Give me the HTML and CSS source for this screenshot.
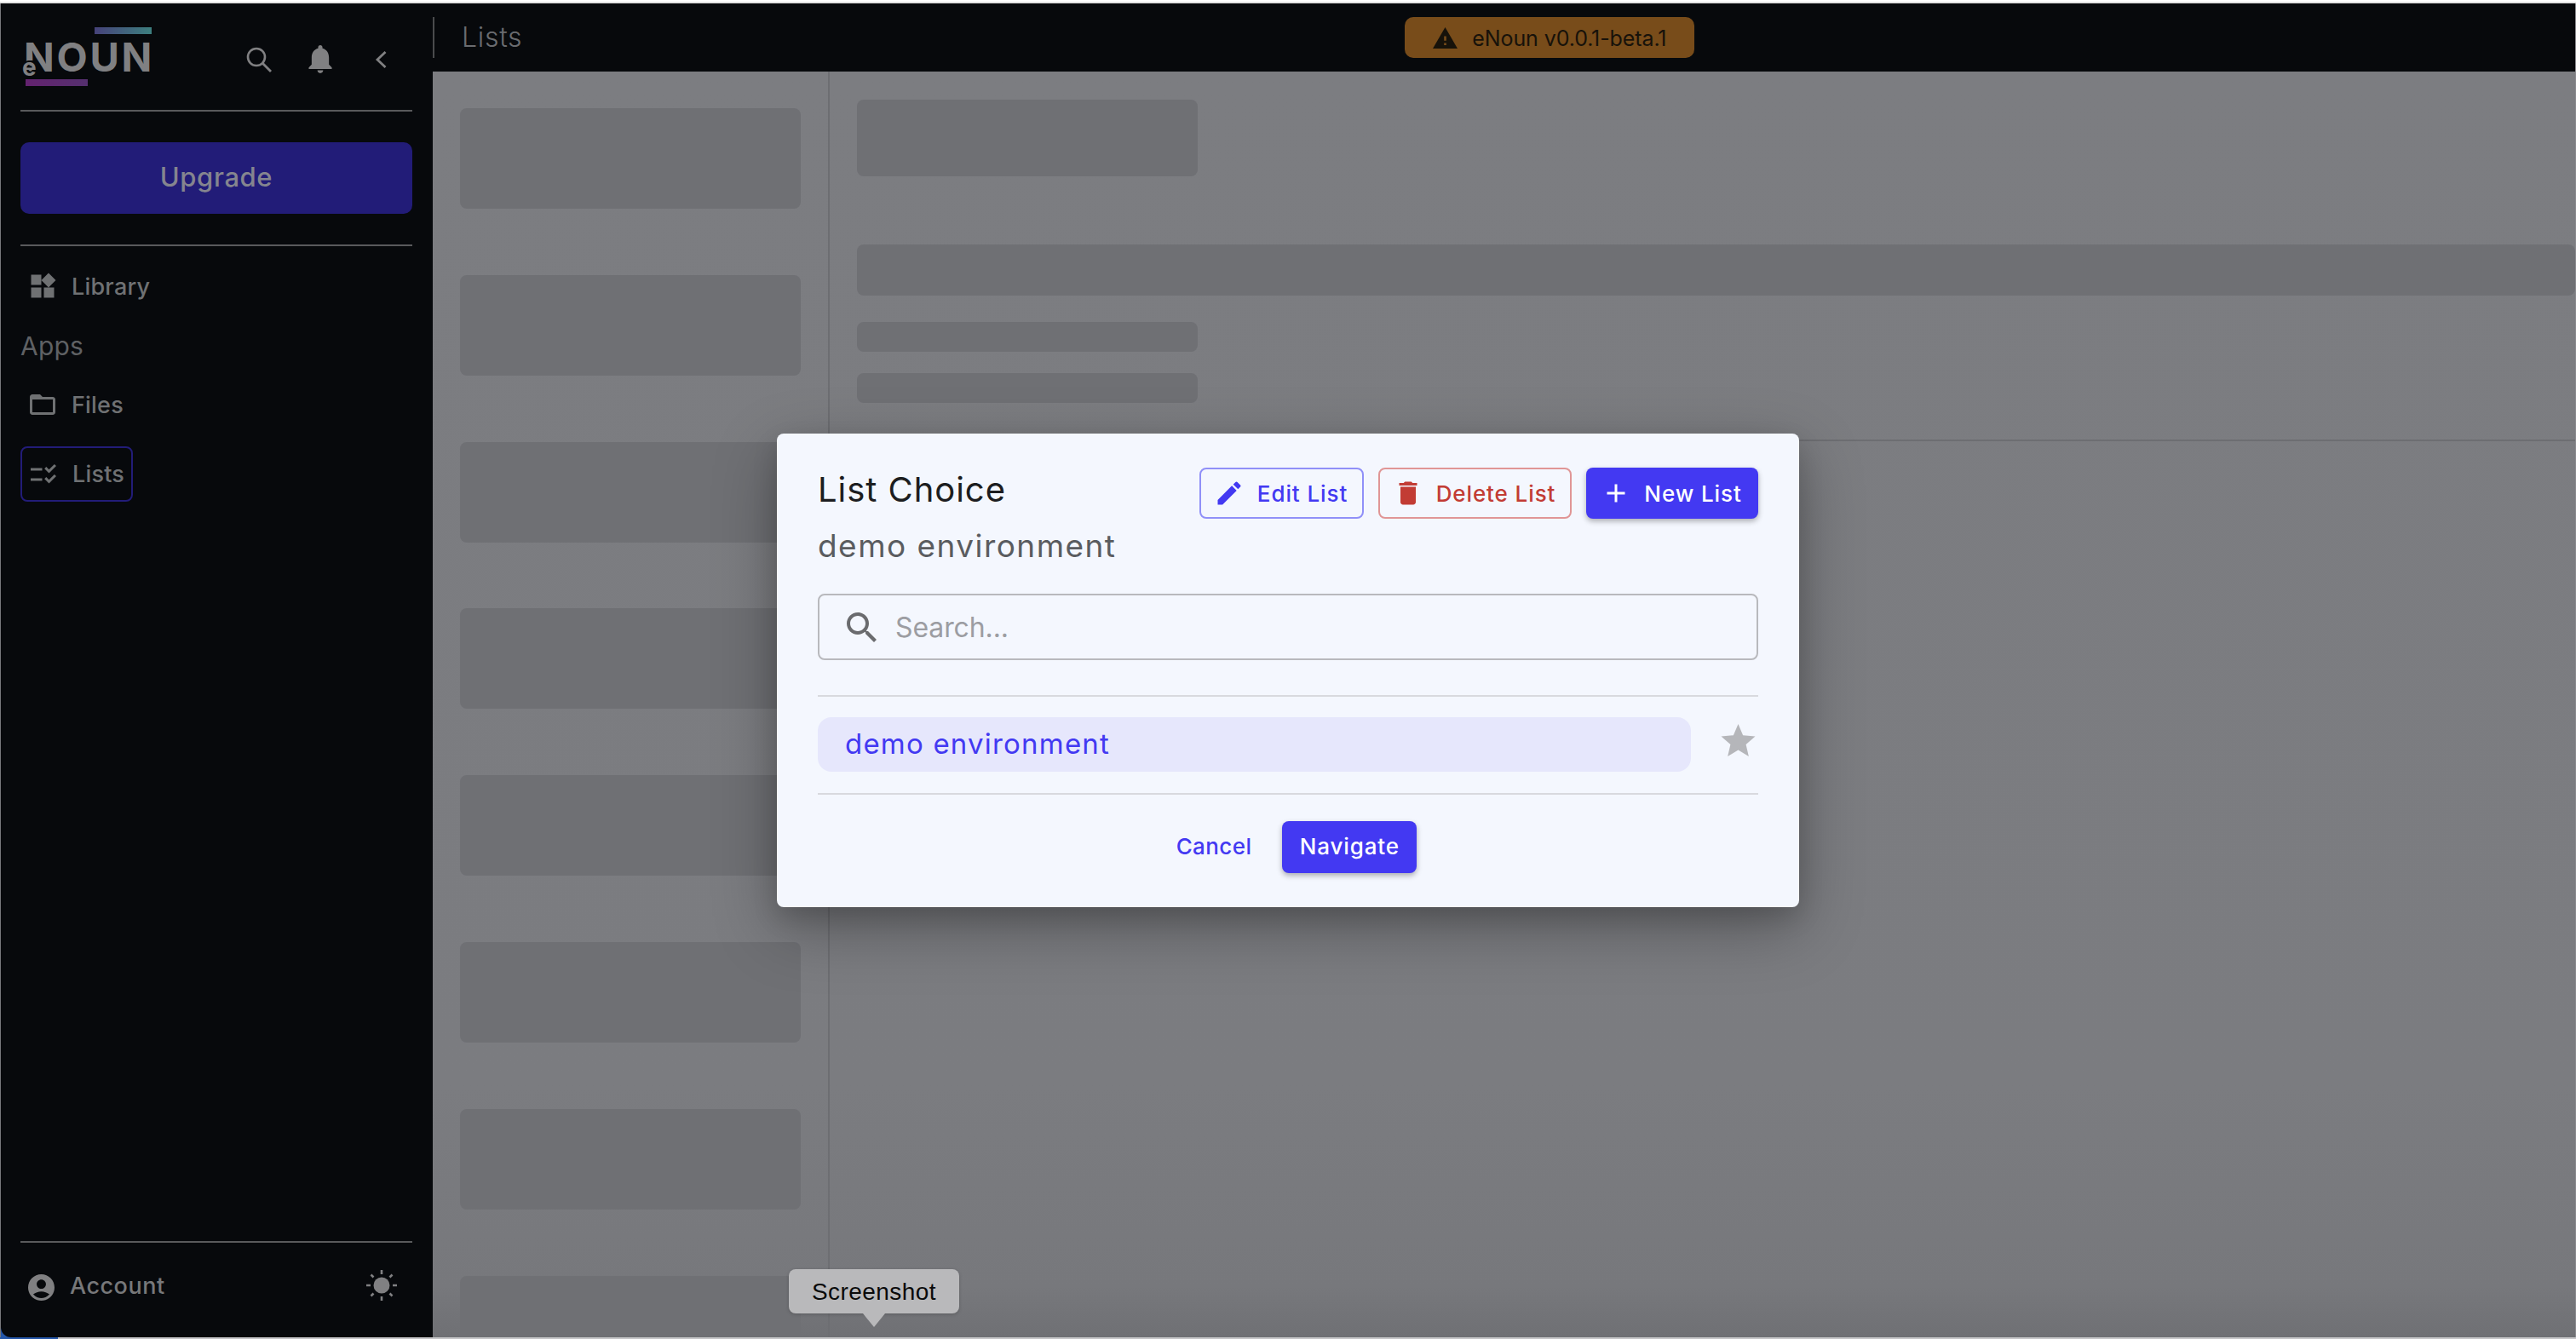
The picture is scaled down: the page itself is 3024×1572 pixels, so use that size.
FILE: index.html
```html
<!DOCTYPE html>
<html lang="en">
<head>
<meta charset="utf-8">
<title>eNoun Lists</title>
<link rel="stylesheet" href="styles.css">
</head>
<body>
<div class="app">
  <div class="shell">
    <aside class="sidebar">
      <div class="side-head">
        <div class="logo">
          <span class="logo-bar-top"></span>
          <span class="logo-word">NOUN</span>
          <span class="logo-e">e</span>
          <span class="logo-bar-bottom"></span>
        </div>
        <div class="head-icons">
          <svg class="ic-search" viewBox="0 0 30 30"><circle cx="12" cy="12" r="10" fill="none" stroke="currentColor" stroke-width="2.6"/><path d="M19 19l10 10" stroke="currentColor" stroke-width="2.8"/></svg>
          <svg class="ic-bell" viewBox="4 2.5 16 19.5"><path fill="currentColor" d="M12 22c1.1 0 2-.9 2-2h-4c0 1.1.89 2 2 2zm6-6v-5c0-3.07-1.64-5.64-4.5-6.32V4c0-.83-.67-1.5-1.5-1.5s-1.5.67-1.5 1.5v.68C7.63 5.36 6 7.92 6 11v5l-2 2v1h16v-1l-2-2z"/></svg>
          <svg class="ic-chev" viewBox="0 0 14 22"><path d="M12.5 2 3 11l9.5 9" fill="none" stroke="currentColor" stroke-width="2.8"/></svg>
        </div>
      </div>
      <div class="rule"></div>
      <button class="upgrade">Upgrade</button>
      <div class="rule"></div>
      <nav class="nav">
        <a class="nav-item"><svg class="nav-ic" viewBox="0 0 24 24"><path fill="currentColor" d="M13 13v8h8v-8h-8zM3 21h8v-8H3v8zM3 3v8h8V3H3zm13.66-1.31L11 7.34 16.66 13l5.66-5.66-5.66-5.65z"/></svg><span>Library</span></a>
        <div class="nav-label">Apps</div>
        <a class="nav-item"><svg class="nav-ic" viewBox="0 0 24 24"><path fill="currentColor" d="M20 6h-8l-2-2H4c-1.1 0-1.99.9-1.99 2L2 18c0 1.1.9 2 2 2h16c1.1 0 2-.9 2-2V8c0-1.1-.9-2-2-2zm0 12H4V8h16v10z"/></svg><span>Files</span></a>
        <a class="nav-item active"><svg class="nav-ic" viewBox="0 0 24 24"><path fill="currentColor" d="M11 7H2v2h9V7zm0 8H2v2h9v-2zm5.34-4L12.8 7.46l1.41-1.41 2.12 2.12 4.24-4.24L22 5.34 16.34 11zm0 8-3.54-3.54 1.41-1.41 2.12 2.12 4.24-4.24L22 13.34 16.34 19z"/></svg><span>Lists</span></a>
      </nav>
      <div class="side-foot">
        <div class="account">
          <svg class="acc-ic" viewBox="2 2 20 20"><path fill="currentColor" d="M12 2C6.48 2 2 6.48 2 12s4.48 10 10 10 10-4.48 10-10S17.52 2 12 2zm0 4c1.93 0 3.5 1.57 3.5 3.5S13.93 13 12 13s-3.5-1.57-3.5-3.5S10.07 6 12 6zm0 14c-2.03 0-4.43-.82-6.14-2.88C7.55 15.8 9.68 15 12 15s4.45.8 6.14 2.12C16.43 19.18 14.03 20 12 20z"/></svg>
          <span>Account</span>
        </div>
        <svg class="sun" viewBox="0 0 36 36"><circle cx="18" cy="18" r="9.5" fill="currentColor"/><path d="M18 0v5M18 31v5M0 18h5M31 18h5M5.5 5.5l3 3M27.5 27.5l3 3M5.5 30.5l3-3M27.5 8.5l3-3" stroke="currentColor" stroke-width="2.6"/></svg>
      </div>
    </aside>
    <main class="main">
      <header class="topbar">
        <h1 class="page-title">Lists</h1>
        <div class="beta-chip">
          <svg class="warn" viewBox="1 2 22 19"><path fill="currentColor" d="M1 21h22L12 2 1 21zm12-3h-2v-2h2v2zm0-4h-2v-4h2v4z"/></svg>
          <span>eNoun v0.0.1-beta.1</span>
        </div>
      </header>
      <div class="content">
        <section class="list-col">
          <div class="skel tile"></div>
          <div class="skel tile"></div>
          <div class="skel tile"></div>
          <div class="skel tile"></div>
          <div class="skel tile"></div>
          <div class="skel tile"></div>
          <div class="skel tile"></div>
          <div class="skel tile"></div>
        </section>
        <section class="detail">
          <div class="detail-top">
            <div class="skel d-title"></div>
            <div class="skel d-bar"></div>
            <div class="skel d-small"></div>
            <div class="skel d-small second"></div>
          </div>
        </section>
      </div>
    </main>
  </div>
  <div class="bottom-strip"><span class="strip-blue"></span></div>

  <div class="dialog" role="dialog">
    <div class="dlg-head">
      <div class="dlg-titles">
        <h2 class="dlg-title">List Choice</h2>
        <p class="dlg-sub">demo environment</p>
      </div>
      <div class="dlg-btns">
        <button class="btn outline-blue"><svg class="btn-ic" viewBox="0 0 24 24"><path fill="currentColor" d="M3 17.25V21h3.75L17.81 9.94l-3.75-3.75L3 17.25zM20.71 7.04c.39-.39.39-1.02 0-1.41l-2.34-2.34a.9959.9959 0 0 0-1.41 0l-1.83 1.83 3.75 3.75 1.83-1.83z"/></svg>Edit List</button>
        <button class="btn outline-red"><svg class="btn-ic" viewBox="0 0 24 24"><path fill="currentColor" d="M6 19c0 1.1.9 2 2 2h8c1.1 0 2-.9 2-2V7H6v12zM19 4h-3.5l-1-1h-5l-1 1H5v2h14V4z"/></svg>Delete List</button>
        <button class="btn solid"><svg class="btn-ic" viewBox="0 0 24 24"><path fill="currentColor" d="M19 13h-6v6h-2v-6H5v-2h6V5h2v6h6v2z"/></svg>New List</button>
      </div>
    </div>
    <div class="search">
      <svg class="search-ic" viewBox="3 3 17.5 17.5"><path fill="currentColor" d="M15.5 14h-.79l-.28-.27C15.41 12.59 16 11.11 16 9.5 16 5.91 13.09 3 9.5 3S3 5.91 3 9.5 5.91 16 9.5 16c1.61 0 3.09-.59 4.23-1.57l.27.28v.79l5 4.99L20.49 19l-4.99-5zm-6 0C7.01 14 5 11.99 5 9.5S7.01 5 9.5 5 14 7.01 14 9.5 11.99 14 9.5 14z"/></svg>
      <span class="placeholder">Search...</span>
    </div>
    <div class="dlg-rule first"></div>
    <div class="list-row">
      <div class="list-pill">demo environment</div>
      <svg class="star" viewBox="2 2 20 19"><path fill="currentColor" d="M12 17.27 18.18 21l-1.64-7.03L22 9.24l-7.19-.61L12 2 9.19 8.63 2 9.24l5.46 4.73L5.82 21z"/></svg>
    </div>
    <div class="dlg-rule second"></div>
    <div class="dlg-actions">
      <button class="text-btn">Cancel</button>
      <button class="nav-btn">Navigate</button>
    </div>
  </div>

  <div class="os-tip">Screenshot</div>
</div>
</body>
</html>
```

FILE: styles.css
```css
* { box-sizing: border-box; }
html, body { margin: 0; padding: 0; background: #fff; }
body { font-family: Inter, "Liberation Sans", sans-serif; overflow: hidden; }
button { font-family: inherit; cursor: pointer; }
h1, h2, p { margin: 0; font-weight: 400; }

.app {
  position: relative;
  width: 3024px;
  height: 1572px;
  padding-top: 2px;
  display: flex;
  flex-direction: column;
}
.app::before {
  content: "";
  height: 2px;
  background: #e4e4e4;
  flex: none;
}

.shell {
  flex: 1;
  min-height: 0;
  display: flex;
  background: #2456a8;
  border-left: 1px solid #77787c;
  border-right: 1px solid #8a8a8e;
}
.bottom-strip {
  flex: none;
  height: 2px;
  background: #c6c6c8;
  display: flex;
}
.strip-blue { width: 68px; background: #2456a8; }

/* sidebar */
.sidebar {
  flex: none;
  width: 507px;
  padding: 0 24px 0 23px;
  background: #07090c;
  color: #6f7173;
  display: flex;
  flex-direction: column;
  border-bottom-left-radius: 12px;
}
.side-head {
  height: 125px;
  display: flex;
  justify-content: space-between;
  align-items: flex-start;
  flex: none;
}
.logo { position: relative; width: 156px; height: 100px; margin-top: 28px; margin-left: 3px; }
.logo-bar-top {
  position: absolute; left: 84px; top: 0; width: 67px; height: 8px;
  background: linear-gradient(90deg, #46427a, #3d7f7f);
}
.logo-bar-bottom {
  position: absolute; left: 3px; top: 61px; width: 73px; height: 8px;
  background: linear-gradient(90deg, #63226f, #55306f);
}
.logo-word {
  position: absolute; left: 1px; top: 6px;
  font-size: 47px; line-height: 57px; font-weight: 700; letter-spacing: 2.7px;
  color: #808082;
}
.logo-e {
  position: absolute; left: -1px; top: 31px;
  font-size: 28px; line-height: 32px; font-weight: 700;
  color: #808082;
  text-shadow: 2px 0 0 #07090c, 0 -2px 0 #07090c, 2px -2px 0 #07090c;
}
.head-icons {
  display: flex;
  align-items: center;
  color: #808082;
  margin-top: 49px;
  margin-right: 30px;
  width: 165px;
}
.ic-search { width: 30px; height: 30px; }
.ic-bell { width: 28px; height: 33px; margin-left: 43px; }
.ic-chev { width: 14px; height: 22px; margin-left: 50px; }

.rule { flex: none; height: 2px; background: #595a5c; }
.upgrade {
  flex: none;
  height: 84px;
  margin: 36px 0;
  padding: 0 0 3px;
  border: 0;
  border-radius: 10px;
  background: #221c78;
  color: #85858f;
  font-size: 31px;
  font-weight: 500;
  letter-spacing: .6px;
}

.nav { display: flex; flex-direction: column; padding-top: 15px; }
.nav-item {
  display: flex;
  align-items: center;
  height: 64px;
  padding-left: 11px;
  font-size: 27px;
  font-weight: 500;
  letter-spacing: .2px;
}
.nav-item + .nav-item { margin-top: 17px; }
.nav-item span { margin-left: 16px; }
.nav-item.active {
  width: 132px;
  height: 65px;
  padding-left: 10px;
  border: 2px solid #221c78;
  border-radius: 8px;
}
.nav-item.active span { margin-left: 16px; }
.nav-ic { width: 36px; height: 36px; flex: none; margin-left: -3px; }
.nav-label {
  height: 75px;
  padding-top: 20px;
  font-size: 30px;
  line-height: 36px;
  font-weight: 400;
  color: #5f6164;
  letter-spacing: .2px;
}
.side-foot {
  margin-top: auto;
  height: 113px;
  border-top: 2px solid #595a5c;
  display: flex;
  align-items: flex-start;
  justify-content: space-between;
  flex: none;
}
.account {
  display: flex;
  align-items: center;
  height: 32px;
  margin-top: 34px;
  margin-left: 9px;
  font-size: 27px;
  font-weight: 500;
  letter-spacing: .5px;
  color: #77787a;
}
.acc-ic { width: 31px; height: 31px; margin-right: 18px; margin-top: 4px; color: #808082; }
.sun { width: 36px; height: 36px; margin-top: 32px; margin-right: 18px; color: #808082; }

/* main */
.main {
  flex: 1;
  min-width: 0;
  display: flex;
  flex-direction: column;
  background: #7c7d81;
}
.topbar {
  flex: none;
  height: 80px;
  background: #07090c;
  position: relative;
  display: flex;
  align-items: center;
}
.topbar::before {
  content: "";
  width: 2px;
  height: 48px;
  background: #4a4b4d;
}
.page-title {
  margin-left: 32px;
  font-size: 32px;
  line-height: 48px;
  font-weight: 300;
  color: #6a6c70;
  letter-spacing: .7px;
}
.beta-chip {
  display: flex;
  align-items: center;
  height: 48px;
  width: 340px;
  margin-left: 1036px;
  padding-left: 33px;
  border-radius: 10px;
  background: #784c1a;
  color: #17120a;
  font-size: 25px;
  letter-spacing: -.1px;
}
.beta-chip span { padding-top: 2px; }
.warn { width: 29px; height: 25px; margin-right: 17px; flex: none; }

.content {
  flex: 1;
  min-height: 0;
  display: flex;
  overflow: hidden;
  background: linear-gradient(180deg, #7c7d81 0, #7b7c80 80%, #77787c 96%, #6f7074 100%);
}
.list-col {
  flex: none;
  width: 466px;
  padding: 43px 33px 0 32px;
  border-right: 2px solid #6d6e72;
  display: flex;
  flex-direction: column;
  gap: 77.8px;
  overflow: hidden;
}
.skel { background: #6f7074; border-radius: 8px; flex: none; }
.tile { height: 118px; width: 400px; }
.detail { flex: 1; min-width: 0; }
.detail-top {
  height: 434px;
  padding: 33px 0 0 32px;
  border-bottom: 2px solid #6d6e72;
}
.d-title { width: 400px; height: 90px; }
.d-bar { height: 60px; margin-top: 80px; }
.d-small { width: 400px; height: 35px; margin-top: 31px; }
.d-small.second { margin-top: 25px; }

/* dialog */
.dialog {
  position: absolute;
  left: 912px;
  top: 509px;
  width: 1200px;
  height: 556px;
  padding: 40px 48px;
  background: #f4f7fe;
  border-radius: 8px;
  box-shadow: 0 24px 76px rgba(0, 0, 0, .3), 0 12px 30px rgba(0, 0, 0, .14);
  display: flex;
  flex-direction: column;
}
.dlg-head { display: flex; justify-content: space-between; height: 114px; flex: none; }
.dlg-title {
  font-size: 40px;
  line-height: 52px;
  color: #1c1d20;
  font-weight: 400;
  letter-spacing: .95px;
}
.dlg-sub {
  margin-top: 18px;
  font-size: 37px;
  line-height: 44px;
  color: #5a5c60;
  font-weight: 400;
  letter-spacing: 1.45px;
}
.dlg-btns { display: flex; gap: 17px; align-items: flex-start; }
.btn {
  height: 60px;
  padding: 0;
  display: flex;
  align-items: center;
  justify-content: center;
  border-radius: 8px;
  font-size: 26px;
  font-weight: 500;
  letter-spacing: .9px;
}
.btn-ic { width: 36px; height: 36px; margin-right: 15px; margin-left: -2px; flex: none; }
.outline-blue { width: 193px; background: transparent; border: 2px solid #9090f8; color: #4339f2; }
.outline-red { width: 227px; background: transparent; border: 2px solid #e09696; color: #c23c34; }
.solid {
  width: 202px;
  background: #4339f2;
  border: 0;
  color: #fff;
  box-shadow: 0 3px 6px rgba(0, 0, 0, .3);
}
.search {
  flex: none;
  height: 78px;
  margin-top: 34px;
  padding-left: 32px;
  border: 2px solid #b8b9bd;
  border-radius: 8px;
  display: flex;
  align-items: center;
}
.search-ic { width: 35px; height: 35px; color: #6a6b6e; flex: none; }
.placeholder { margin-left: 22px; font-size: 32px; color: #9c9da2; letter-spacing: -.1px; }
.dlg-rule { flex: none; height: 2px; background: #d8d9de; }
.dlg-rule.first { margin-top: 41px; }
.dlg-rule.second { margin-top: 25px; }
.list-row {
  flex: none;
  margin-top: 24px;
  display: flex;
  align-items: flex-start;
  justify-content: space-between;
}
.list-pill {
  width: 1025px;
  height: 64px;
  padding-left: 32px;
  border-radius: 16px;
  background: #e6e7fc;
  color: #4339f2;
  font-size: 33px;
  line-height: 62px;
  letter-spacing: 1.2px;
}
.star { width: 41px; height: 38px; margin-top: 8px; margin-right: 3px; color: #b5b6ba; }
.dlg-actions {
  flex: none;
  margin-top: 31px;
  display: flex;
  justify-content: center;
  gap: 16px;
}
.text-btn {
  height: 61px;
  padding: 0 20px 2px;
  background: transparent;
  border: 0;
  color: #4339f2;
  font-size: 26px;
  font-weight: 500;
  letter-spacing: .4px;
}
.nav-btn {
  width: 158px;
  height: 61px;
  padding: 0 0 2px;
  border: 0;
  border-radius: 8px;
  background: #4339f2;
  color: #fff;
  font-size: 26px;
  font-weight: 500;
  letter-spacing: .85px;
  box-shadow: 0 3px 6px rgba(0, 0, 0, .3);
}

/* macOS tooltip */
.os-tip {
  position: absolute;
  left: 926px;
  top: 1490px;
  width: 200px;
  height: 52px;
  border-radius: 8px;
  background: #b9b9bb;
  color: #0a0a0a;
  font-family: "Liberation Sans", sans-serif;
  font-size: 28px;
  line-height: 54px;
  letter-spacing: .45px;
  text-align: center;
  box-shadow: 0 1px 4px rgba(0, 0, 0, .2);
}
.os-tip::after {
  content: "";
  position: absolute;
  left: 87px;
  top: 52px;
  border-left: 13px solid transparent;
  border-right: 13px solid transparent;
  border-top: 16px solid #b9b9bb;
}
```
